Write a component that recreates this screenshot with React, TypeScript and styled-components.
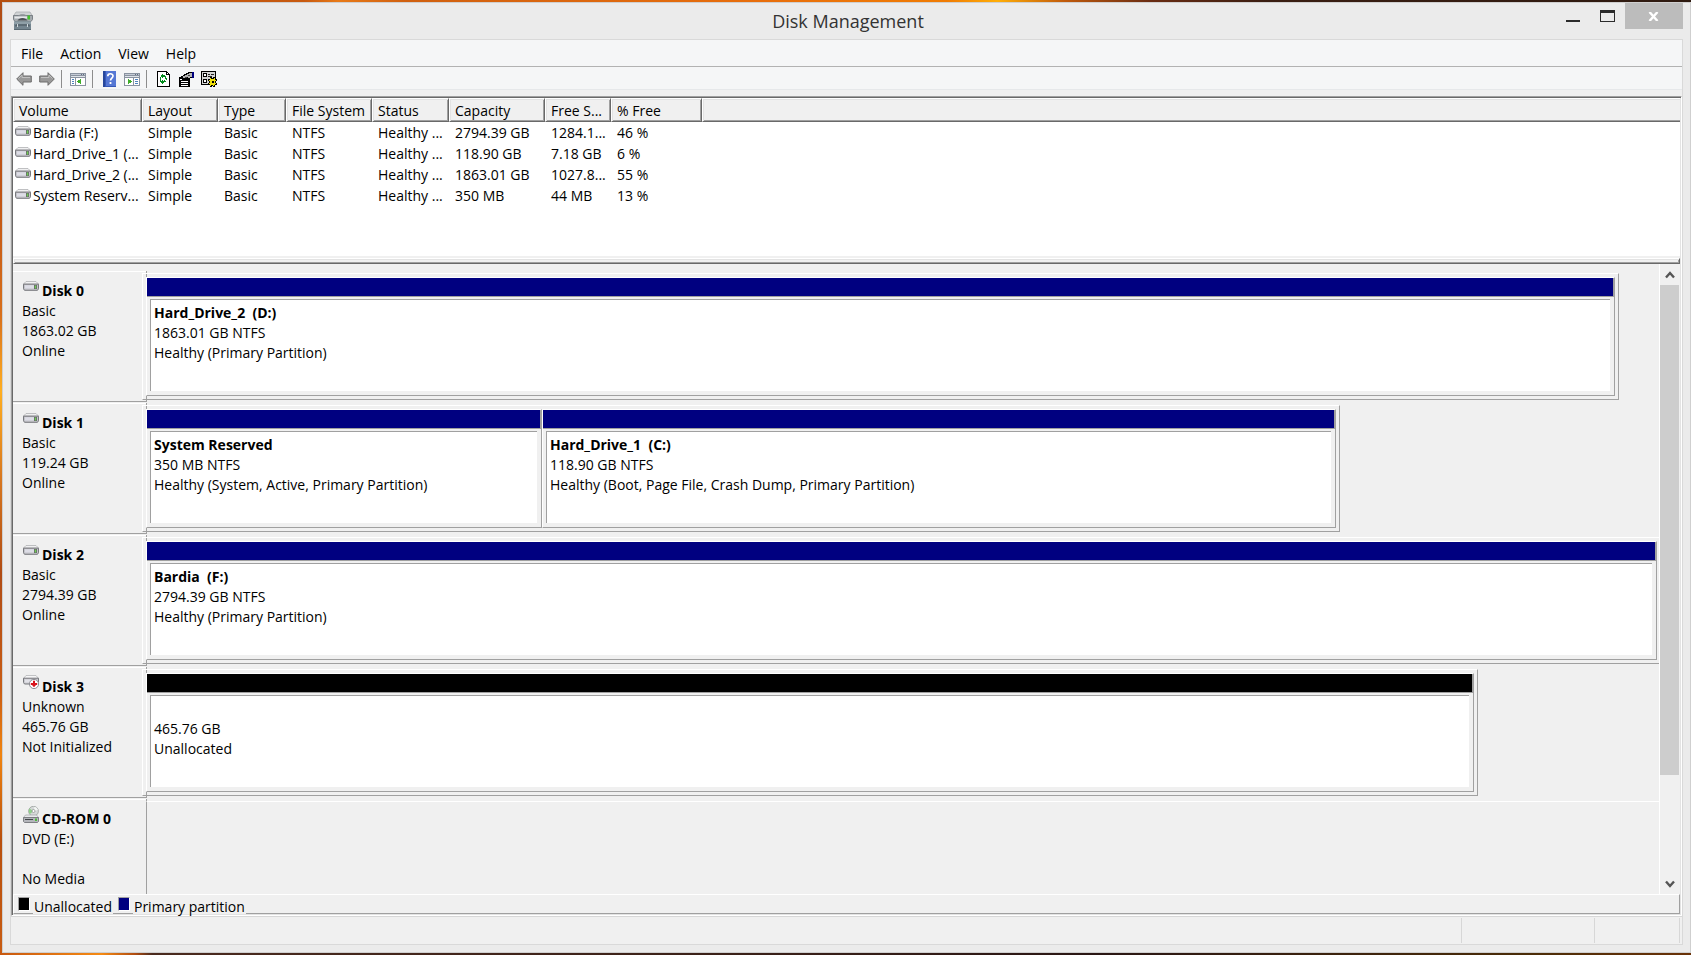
import React from "react";
import styled, { createGlobalStyle, css } from "styled-components";

type DriveKind = "disk" | "offline" | "cdrom";

interface Partition {
  name?: string;
  size: string;
  status: string;
  share: number;
}

interface Disk {
  name: string;
  kind: DriveKind;
  lines: string[];
  // width of the graph, in percent of the pane
  width: number;
  clipped?: boolean;
  unallocated?: boolean;
  partitions: Partition[];
}

const columns = [
  { title: "Volume", width: 129 },
  { title: "Layout", width: 76 },
  { title: "Type", width: 68 },
  { title: "File System", width: 86 },
  { title: "Status", width: 77 },
  { title: "Capacity", width: 96 },
  { title: "Free S...", width: 66 },
  { title: "% Free", width: 91 }
];

const volumes = [
  ["Bardia (F:)", "Simple", "Basic", "NTFS", "Healthy ...", "2794.39 GB", "1284.1...", "46 %"],
  ["Hard_Drive_1 (...", "Simple", "Basic", "NTFS", "Healthy ...", "118.90 GB", "7.18 GB", "6 %"],
  ["Hard_Drive_2 (...", "Simple", "Basic", "NTFS", "Healthy ...", "1863.01 GB", "1027.8...", "55 %"],
  ["System Reserv...", "Simple", "Basic", "NTFS", "Healthy ...", "350 MB", "44 MB", "13 %"]
];

const disks: Disk[] = [
  {
    name: "Disk 0",
    kind: "disk",
    lines: ["Basic", "1863.02 GB", "Online"],
    width: 97.36,
    partitions: [
      {
        name: "Hard_Drive_2  (D:)",
        size: "1863.01 GB NTFS",
        status: "Healthy (Primary Partition)",
        share: 1
      }
    ]
  },
  {
    name: "Disk 1",
    kind: "disk",
    lines: ["Basic", "119.24 GB", "Online"],
    width: 78.97,
    partitions: [
      {
        name: "System Reserved",
        size: "350 MB NTFS",
        status: "Healthy (System, Active, Primary Partition)",
        share: 396
      },
      {
        name: "Hard_Drive_1  (C:)",
        size: "118.90 GB NTFS",
        status: "Healthy (Boot, Page File, Crash Dump, Primary Partition)",
        share: 794
      }
    ]
  },
  {
    name: "Disk 2",
    kind: "disk",
    lines: ["Basic", "2794.39 GB", "Online"],
    width: 100,
    clipped: true,
    partitions: [
      {
        name: "Bardia  (F:)",
        size: "2794.39 GB NTFS",
        status: "Healthy (Primary Partition)",
        share: 1
      }
    ]
  },
  {
    name: "Disk 3",
    kind: "offline",
    lines: ["Unknown", "465.76 GB", "Not Initialized"],
    width: 88.06,
    unallocated: true,
    partitions: [{ size: "465.76 GB", status: "Unallocated", share: 1 }]
  },
  {
    name: "CD-ROM 0",
    kind: "cdrom",
    lines: ["DVD (E:)", "", "No Media"],
    width: 100,
    clipped: true,
    partitions: []
  }
];

const App: React.FC = () => {
  return (
    <>
      <GlobalStyle />
      <Desktop>
        <Window>
          <TitleBar>
            <AppIcon />
            <Title>Disk Management</Title>
            <WindowButtons>
              <WindowButton aria-label="Minimize">
                <svg width="14" height="13" shapeRendering="crispEdges">
                  <path d="M0 10h14v2H0z" fill="#2b2b2b" />
                </svg>
              </WindowButton>
              <WindowButton aria-label="Maximize">
                <svg width="15" height="12" shapeRendering="crispEdges">
                  <path
                    fillRule="evenodd"
                    d="M0 0h15v12H0zM1 3v8h13V3z"
                    fill="#2b2b2b"
                  />
                </svg>
              </WindowButton>
              <WindowButton aria-label="Close" $close>
                <svg width="11" height="9" viewBox="0 0 11 9">
                  <path
                    d="M1.5 0L9.5 9M9.5 0L1.5 9"
                    stroke="#fff"
                    strokeWidth="2.4"
                  />
                </svg>
              </WindowButton>
            </WindowButtons>
          </TitleBar>

          <Client>
            <MenuBar>
              <MenuItem>File</MenuItem>
              <MenuItem>Action</MenuItem>
              <MenuItem>View</MenuItem>
              <MenuItem>Help</MenuItem>
            </MenuBar>
            <Toolbar />
            <Pane>
              <VolumeList>
                <VolumeTable>
                  <colgroup>
                    {columns.map(c => (
                      <col key={c.title} style={{ width: c.width }} />
                    ))}
                    <col />
                  </colgroup>
                  <thead>
                    <tr>
                      {columns.map(c => (
                        <HeadCell key={c.title} scope="col">
                          {c.title}
                        </HeadCell>
                      ))}
                      <HeadFiller />
                    </tr>
                  </thead>
                  <tbody>
                    {volumes.map(row => (
                      <tr key={row[0]}>
                        {row.map((value, i) =>
                          i === 0 ? (
                            <NameCell key={i}>
                              <NameBox>
                                <DriveIcon kind="disk" />
                                {value}
                              </NameBox>
                            </NameCell>
                          ) : (
                            <Cell key={i}>{value}</Cell>
                          )
                        )}
                        <td />
                      </tr>
                    ))}
                  </tbody>
                </VolumeTable>
              </VolumeList>
              <Splitter />
              <DiskPane>
                <DiskList>
                  {disks.map(disk => (
                    <DiskItem key={disk.name} disk={disk} />
                  ))}
                </DiskList>
                <ScrollBar>
                  <ScrollButton aria-label="Scroll up">
                    <svg width="10" height="8" viewBox="0 0 10 8">
                      <path d="M1 6.5L5 2l4 4.5" {...chevron} />
                    </svg>
                  </ScrollButton>
                  <Thumb />
                  <Track />
                  <ScrollButton aria-label="Scroll down">
                    <svg width="10" height="8" viewBox="0 0 10 8">
                      <path d="M1 1.5L5 6l4-4.5" {...chevron} />
                    </svg>
                  </ScrollButton>
                </ScrollBar>
              </DiskPane>
              <Legend>
                <Swatch $color="#000" />
                <LegendText>Unallocated</LegendText>
                <Swatch $color="#000080" />
                <LegendText>Primary partition</LegendText>
              </Legend>
            </Pane>
            <StatusBar>
              <StatusCell $grow />
              <StatusCell $width={133} />
              <StatusCell $width={85} />
            </StatusBar>
          </Client>
        </Window>
      </Desktop>
    </>
  );
};

export default App;

const chevron = { fill: "none", stroke: "#555", strokeWidth: 2.4 };

const DiskItem: React.FC<{ disk: Disk }> = ({ disk }) => (
  <DiskRow $graph={disk.partitions.length > 0}>
    <DiskLabel>
      <DiskName>
        <DriveIcon kind={disk.kind} />
        {disk.name}
      </DiskName>
      {disk.lines.map((line, i) => (
        <Line key={i}>{line}</Line>
      ))}
    </DiskLabel>
    {disk.partitions.length > 0 ? (
      <DiskGraph
        style={{
          width: `${disk.width}%`,
          gridTemplateColumns: disk.partitions
            .map(p => `minmax(0, ${p.share}fr)`)
            .join(" ")
        }}
        $clipped={disk.clipped}
      >
        {disk.partitions.map(p => (
          <PartitionBox key={p.size}>
            <PartitionBar $color={disk.unallocated ? "#000" : "#000080"} />
            <PartitionBody>
              <Line $bold>{p.name}</Line>
              <Line>{p.size}</Line>
              <Line>{p.status}</Line>
            </PartitionBody>
          </PartitionBox>
        ))}
      </DiskGraph>
    ) : (
      <EmptyGraph />
    )}
  </DiskRow>
);

const DriveIcon: React.FC<{ kind: DriveKind }> = ({ kind }) => {
  if (kind === "cdrom") {
    return (
      <svg width="16" height="17" viewBox="0 0 16 17">
        <circle cx="10.5" cy="5.2" r="4.9" fill="#d5d9d8" stroke="#9a9f9d" strokeWidth=".8" />
        <path d="M10.5 5.2L6.5 2.6A4.7 4.7 0 0 0 6.8 8z" fill="#8fd08a" />
        <path d="M10.5 5.2L11.5.8A4.7 4.7 0 0 1 15 4z" fill="#f4f6f5" />
        <circle cx="10.5" cy="5" r="1.5" fill="#fff" stroke="#888" strokeWidth=".7" />
        <path d="M2.5 9h11l2 2.500H.5z" fill="#e9eaec" stroke="#a2a4a8" strokeWidth=".7" />
        <path d="M.5 11.500h15v4l-1 1h-13l-1-1z" fill="#b4b6bb" stroke="#74767b" strokeWidth=".9" />
        <path d="M2 13.500h8" stroke="#44464a" />
        <path d="M12 12.500h2V15h-2z" fill="#4cb83e" />
      </svg>
    );
  }
  if (kind === "offline") {
    return (
      <svg width="16" height="14" viewBox="0 0 16 14">
        <path d="M3 .5h10l2.500 3H.5z" fill="#f6f6f7" stroke="#b4b5b8" strokeWidth=".8" />
        <path d="M.5 3.200h15v4.300l-1 1.500h-13l-1-1.500z" fill="#c9cacf" stroke="#77787d" />
        <path d="M2 4.500h6v3H2z" fill="#e2e2e8" />
        <circle cx="11" cy="9" r="4.600" fill="#fff" stroke="#8e8e94" />
        <path d="M10 5.800h2V8h2.200v2h-1.200L11 12.300 9 10H7.800V8H10z" fill="#d8141c" />
      </svg>
    );
  }
  return (
    <svg width="16" height="10" viewBox="0 0 16 10">
      <path d="M3 .5h10l2.500 2.500H.5z" fill="#f0f0f1" stroke="#b0b1b4" strokeWidth=".8" />
      <path d="M.5 3.200h15v4.600l-1 1.500h-13l-1-1.500z" fill="#c3c4c9" stroke="#77787d" />
      <path d="M2 4.200h9v3.300H2z" fill="#dddde6" />
      <path d="M11 4h3v4h-3z" fill="#66686a" />
      <path d="M11.800 4.500h1.400v3h-1.400z" fill="#6fd052" />
    </svg>
  );
};

const AppIcon: React.FC = () => (
  <svg width="20" height="20" viewBox="0 0 20 20">
    <path d="M3 1h14l2.500 4H.5z" fill="#cfd2d4" stroke="#a9adb0" strokeWidth=".8" />
    <path d="M.5 4.500h19v4L18 10.500H2L.5 8.500z" fill="#a4aaae" stroke="#7b8186" />
    <path d="M1.500 5.500h12.500v2H1.500z" fill="#e6e8ea" />
    <path d="M5 5C6 2.500 13 2.500 14 5z" fill="#8b9195" />
    <path d="M4.500 9.500C6 6 13 6 14.500 9.500z" fill="#4b5054" />
    <path d="M14.500 4.500H17v4h-2.500z" fill="#45c22d" />
    <path d="M1 10.500h17V19H1z" fill="#74858f" />
    <path d="M1 10.500h17V13H1z" fill="#8f9fa7" />
    <path d="M3 15.500V14h13v1.500" fill="none" stroke="#47535b" />
    <path d="M4.500 13v3M14.500 13v3" stroke="#cfd8dc" />
    <path d="M1 18h17v1H1z" fill="#5a6972" />
  </svg>
);

const ArrowIcon: React.FC<{ forward?: boolean }> = ({ forward }) => (
  <svg width="16" height="14" viewBox="0 0 16 14">
    <path
      d={
        forward
          ? "M15.300 7L9 .7V4H.7v6H9v3.300z"
          : "M.7 7L7 .7V4h8.300v6H7v3.300z"
      }
      fill="#999"
      stroke="#6c6c6c"
    />
    <path
      d={forward ? "M2 5.500h8V3l3.500 3.500" : "M2.500 6.500L6 3v2.500h8"}
      fill="none"
      stroke="#c0c0c0"
    />
  </svg>
);

const TreeIcon: React.FC<{ right?: boolean }> = ({ right }) => (
  <svg width="16" height="13" viewBox="0 0 16 13" shapeRendering="crispEdges">
    <path d="M0 0h16v13H0z" fill="#8a93a0" />
    <path d="M1 1h14v1H1z" fill="#c5ccd6" />
    <path d="M11 1h1v1h-1zM13 1h1v1h-1z" fill="#5f6d80" />
    <path d="M1 3h14v1H1z" fill="#dfe4ea" />
    <path d={right ? "M1 5h8v7H1zM10 5h5v7h-5z" : "M1 5h4v7H1zM6 5h9v7H6z"} fill="#fff" />
    <path
      d={right ? "M11 6h3v1h-3zM11 8h3v1h-3zM11 10h3v1h-3z" : "M2 6h2v1H2zM2 8h2v1H2zM2 10h2v1H2z"}
      fill="#4f83bd"
    />
    <path d={right ? "M4 5.500l4 3-4 3z" : "M11 5.500l-4 3 4 3z"} fill="#3fae2a" />
  </svg>
);

const HelpIcon: React.FC = () => (
  <svg width="13" height="16" viewBox="0 0 13 16">
    <path d="M0 0h13v16H0z" fill="#3558b8" />
    <path d="M3 0h10v15H3z" fill="#5577d4" />
    <path d="M0 0h2v16H0z" fill="#27479c" />
    <path
      d="M4.800 5.200C4.800 2 10 2 10 5c0 2-2.500 2.200-2.500 4.500"
      fill="none"
      stroke="#fff"
      strokeWidth="1.7"
    />
    <path d="M6.600 11h1.800v2H6.600z" fill="#fff" />
  </svg>
);

const RefreshIcon: React.FC = () => (
  <svg width="13" height="16" viewBox="0 0 13 16" shapeRendering="crispEdges">
    <path d="M0 0h10v1h1v1h1v1h1v13H0z" fill="#000" />
    <path d="M1 1h8v3h3v11H1z" fill="#fff" />
    <path d="M10 2h1v1h-1z" fill="#fff" />
    <path
      d="M6 3v1h2v1h1v3H8V6H6v1H5V6H4V4h1V3zM3 8h1v2h1V9h1v1h1V9h1v2H7v1H6v1H5v-1H4v-1H3z"
      fill="#008a1c"
    />
    <path d="M9 7h1v2H9zM8 10h1v1H8zM3 6h1v2H3z" fill="#008a1c" />
  </svg>
);

const PropertiesIcon: React.FC = () => (
  <svg width="15" height="15" viewBox="0 0 15 15" shapeRendering="crispEdges">
    <path d="M0 5h11v10H0z" fill="#000" />
    <path d="M1 7h2v1H1zM2 9h7v1H2zM2 11h7v1H2zM2 13h7v1H2z" fill="#fff" />
    <path d="M2 4h2V3h1V2h2V1h2V0h4v6h-2v2H9V7H8v1H7V7H5V6H3V5H2z" fill="#000" />
    <path d="M4 4h2V3h2V2h2V1h3v4h-2v1H9V5H6v1H4z" fill="#b4b4b4" />
    <path d="M6 5h2v1H6zM9 3h2v1H9z" fill="#444" />
    <path d="M13 0h2v6h-2z" fill="#000080" />
  </svg>
);

const SettingsIcon: React.FC = () => (
  <svg width="16" height="16" viewBox="0 0 16 16" shapeRendering="crispEdges">
    <path d="M0 0h15v14H0z" fill="#000" />
    <path d="M1 1h13v12H1z" fill="#d4d4d4" />
    <path d="M2 2h4v4H2zM2 8h4v4H2z" fill="#000" />
    <path d="M3 3h2v2H3zM3 9h2v2H3z" fill="#fff" />
    <path d="M7 3h2v1H7zM10 3h3v1h-3zM7 5h4v1H7z" fill="#222" />
    <path d="M9 6h2v1h1V6h2v2h2v2h-1v2h1v2h-2v2h-2v-1h-1v1H9v-2H7v-2h1v-2H7V8h2z" fill="#000" />
    <path d="M9 7h1v1h3V7h1v2h1v1h-1v2h1v1h-1v1h-1v1h-1v-1h-2v1H9v-2H8v-1h1v-2H8V9h1z" fill="#f2e20c" />
    <path d="M11 10h2v2h-2z" fill="#000" />
  </svg>
);

const Toolbar: React.FC = () => (
  <ToolRow>
    <ToolButton aria-label="Back">
      <ArrowIcon />
    </ToolButton>
    <ToolButton aria-label="Forward">
      <ArrowIcon forward />
    </ToolButton>
    <Separator />
    <ToolButton aria-label="Show or hide console tree">
      <TreeIcon />
    </ToolButton>
    <Separator />
    <ToolButton aria-label="Help">
      <HelpIcon />
    </ToolButton>
    <ToolButton aria-label="Show or hide action pane">
      <TreeIcon right />
    </ToolButton>
    <Separator />
    <ToolButton aria-label="Refresh">
      <RefreshIcon />
    </ToolButton>
    <ToolButton aria-label="Properties">
      <PropertiesIcon />
    </ToolButton>
    <ToolButton aria-label="Settings">
      <SettingsIcon />
    </ToolButton>
  </ToolRow>
);

const GlobalStyle = createGlobalStyle`
  * {
    box-sizing: border-box;
  }

  body {
    margin: 0;
    color: #000;
    font-family: "Open Sans", "Noto Sans", sans-serif;
    font-size: 14px;
    line-height: 20px;
  }

  button {
    padding: 0;
    border: 0;
    background: none;
    color: inherit;
    font: inherit;
  }

  svg {
    display: block;
    flex: none;
  }
`;

const raised = css`
  border-style: solid;
  border-width: 1px;
  border-color: #fff #a0a0a0 #a0a0a0 #fff;
`;

const Desktop = styled("div")`
  display: flex;
  height: 100vh;
  padding: 2px 0 2px 2px;
  background: linear-gradient(
        90deg,
        #b5500f 0%,
        #c85a10 18%,
        #e87a18 20%,
        #d06010 24%,
        #e86e0c 45%,
        #f07c04 56%,
        #ffae08 59%,
        #c05a0c 63%,
        #6a2c12 68%,
        #3a1e12 75%,
        #2e1a10 100%
      )
      top / 100% 2px no-repeat,
    linear-gradient(
        90deg,
        #c8580f 0%,
        #f58a14 6%,
        #b04c10 8%,
        #4a2a1e 9%,
        #3a2018 45%,
        #2a1614 65%,
        #4a2c08 90%,
        #6a3208 100%
      )
      bottom / 100% 2px no-repeat,
    linear-gradient(
        180deg,
        #b04c14 0%,
        #c05414 20%,
        #d8701c 33%,
        #ffae20 41%,
        #d87820 50%,
        #b04c14 60%,
        #c85c14 72%,
        #f08410 79%,
        #b8500f 88%,
        #c85c12 100%
      )
      left / 2px 100% no-repeat;
`;

const Window = styled("main")`
  display: flex;
  flex: 1;
  flex-direction: column;
  min-width: 0;
  padding: 0 7px 7px;
  border: 1px solid #cfcfcf;
  background-color: #ebebeb;
`;

const TitleBar = styled("header")`
  display: grid;
  grid-template-columns: 1fr auto 1fr;
  align-items: center;
  height: 36px;
  padding-left: 3px;
`;

const Title = styled("h1")`
  margin: 0;
  color: #333;
  font-size: 18px;
  font-weight: 400;
  line-height: 24px;
`;

const WindowButtons = styled("div")`
  display: flex;
  justify-self: end;
  align-self: start;
`;

const WindowButton = styled("button")<{ $close?: boolean }>`
  display: flex;
  align-items: center;
  justify-content: center;
  width: ${({ $close }) => ($close ? "58px" : "34px")};
  height: 26px;
  padding-right: 2px;
  background-color: ${({ $close }) => ($close ? "#bcbcbc" : "transparent")};
`;

const Client = styled("div")`
  display: flex;
  flex: 1;
  flex-direction: column;
  min-height: 0;
  border: 1px solid #d9d9d9;
  background-color: #f0f0f0;
`;

const MenuBar = styled("nav")`
  display: flex;
  align-items: center;
  gap: 17px;
  height: 27px;
  padding: 2px 0 0 10px;
  border-bottom: 1px solid #b2b2b2;
  background-color: #f5f6f7;
`;

const MenuItem = styled("button")`
  font-size: 14px;
`;

const ToolRow = styled("div")`
  display: flex;
  align-items: center;
  height: 23px;
  padding: 2px 0 0 1px;
  border-bottom: 1px solid #e6e8ea;
  background-color: #f5f6f7;
`;

const ToolButton = styled("button")`
  display: flex;
  align-items: center;
  justify-content: center;
  width: 23px;
  height: 20px;
  padding: 0 3px 0 4px;
`;

const Separator = styled("span")`
  width: 1px;
  height: 18px;
  margin: 0 4px 0 3px;
  background-color: #8d8d8d;
`;

const Pane = styled("section")`
  display: flex;
  flex: 1;
  flex-direction: column;
  min-height: 0;
  margin-top: 6px;
  border-style: solid;
  border-width: 1px;
  border-color: #a0a0a0 #fff #fff #a0a0a0;
  box-shadow: inset 1px 1px #696969, inset -1px -1px #e3e3e3;
  padding: 1px;
`;

const VolumeList = styled("div")`
  height: 158px;
  overflow: hidden;
  background-color: #fff;
`;

const VolumeTable = styled("table")`
  width: 100%;
  table-layout: fixed;
  border-collapse: separate;
  border-spacing: 0;
  white-space: nowrap;
`;

const headFace = css`
  height: 24px;
  background-color: #f0f0f0;
  font-weight: 400;
  text-align: left;
`;

const HeadCell = styled("th")`
  ${headFace}
  padding: 2px 0 0 5px;
  border-style: solid;
  border-width: 1px;
  border-color: #fff #696969 #696969 #fff;
  box-shadow: inset 1px 1px #e3e3e3, inset -1px -1px #a0a0a0;
`;

const HeadFiller = styled("td")`
  ${headFace}
  padding: 0;
  border-style: solid;
  border-width: 1px 0 1px 1px;
  border-color: #fff #696969 #696969 #fff;
  box-shadow: inset 1px 1px #e3e3e3, inset 0 -1px #a0a0a0;
`;

const Cell = styled("td")`
  height: 21px;
  padding: 0 0 0 6px;
`;

const NameCell = styled(Cell)`
  padding-left: 2px;
`;

const NameBox = styled("div")`
  display: flex;
  gap: 2px;

  svg {
    margin-top: 3px;
  }
`;

const Splitter = styled("div")`
  height: 6px;
  margin-top: 2px;
  border-style: solid;
  border-width: 1px;
  border-color: #fff #696969 #696969 #fff;
  box-shadow: inset 1px 1px #e3e3e3, inset -1px -1px #a0a0a0;
`;

const DiskPane = styled("div")`
  display: flex;
  flex: 1;
  min-height: 0;
`;

const DiskList = styled("div")`
  flex: 1;
  min-width: 0;
  padding-top: 7px;
  overflow: hidden;
`;

// The short grey ticks join the label column to the graph
const DiskRow = styled("article")<{ $graph: boolean }>`
  display: grid;
  grid-template-columns: 129px 4px minmax(0, 1fr);
  height: 132px;
  background: linear-gradient(#a0a0a0 2px, transparent 2px 3px, #a0a0a0 3px)
    133px 0 / 1px 6px no-repeat;
  ${({ $graph }) =>
    $graph &&
    css`
      background: linear-gradient(#a0a0a0 2px, transparent 2px 3px, #a0a0a0 3px)
          133px 0 / 1px 6px no-repeat,
        linear-gradient(#a0a0a0, #a0a0a0) 133px 124px / 1px 7px no-repeat;
    `}
`;

const DiskLabel = styled("div")`
  grid-area: 1 / 1 / 2 / 3;
  height: 131px;
  padding: 9px 0 0 9px;
  border-top: 1px solid #fff;
  border-bottom: 1px solid #a0a0a0;
  white-space: nowrap;
`;

const DiskName = styled("div")`
  display: flex;
  gap: 3px;
  height: 20px;
  padding-left: 1px;
  font-weight: 700;

  svg {
    align-self: center;
    margin-bottom: 10px;
  }
`;

const Line = styled("div")<{ $bold?: boolean }>`
  height: 20px;
  font-weight: ${({ $bold }) => ($bold ? 700 : 400)};
  white-space: pre;
`;

const DiskGraph = styled("div")<{ $clipped?: boolean }>`
  display: grid;
  grid-area: 1 / 2 / 2 / 4;
  height: 127px;
  margin-top: 2px;
  padding: 3px;
  ${raised}
  ${({ $clipped }) =>
    $clipped &&
    css`
      padding-right: 2px;
      border-right: 0;
    `}
`;

const EmptyGraph = styled("div")`
  grid-area: 1 / 3 / 2 / 4;
  margin-top: 2px;
  border-top: 1px solid #fff;
  border-left: 1px solid #a0a0a0;
`;

const PartitionBox = styled("div")`
  display: flex;
  flex-direction: column;
  min-width: 0;
  ${raised}
`;

const PartitionBar = styled("div")<{ $color: string }>`
  height: 19px;
  border-right: 1px solid #a0a0a0;
  border-bottom: 1px solid #a0a0a0;
  background-color: ${({ $color }) => $color};
`;

const PartitionBody = styled("div")`
  height: 92px;
  margin: 2px 4px 0 3px;
  padding: 3px 0 0 3px;
  border-top: 1px solid #a0a0a0;
  border-left: 1px solid #a0a0a0;
  background-color: #fff;
  overflow: hidden;
`;

const ScrollBar = styled("div")`
  display: flex;
  flex-direction: column;
  width: 21px;
  padding-right: 1px;
  border-left: 1px solid #fff;
`;

const ScrollButton = styled("button")`
  display: flex;
  align-items: center;
  justify-content: center;
  height: 21px;
`;

const Thumb = styled("div")`
  flex: 5;
  background-color: #cdcdcd;
`;

const Track = styled("div")`
  flex: 1;
`;

const Legend = styled("footer")`
  display: flex;
  height: 20px;
  padding-left: 4px;
  ${raised}
`;

const Swatch = styled("span")<{ $color: string }>`
  width: 12px;
  height: 14px;
  margin-top: 2px;
  ${raised}
  border-color: #a0a0a0 #fff #fff #a0a0a0;
  background-color: ${({ $color }) => $color};
`;

const LegendText = styled("span")`
  height: 19px;
  margin: 0 5px 0 3px;
  padding: 0 1px;
  background-color: #f0f0f0;
  line-height: 24px;
`;

const StatusBar = styled("div")`
  display: flex;
  height: 28px;
  padding: 1px 2px 1px 0;
  border-top: 1px solid #d7d7d7;
`;

const StatusCell = styled("div")<{ $grow?: boolean; $width?: number }>`
  flex: ${({ $grow, $width }) => ($grow ? "1" : `0 0 ${$width}px`)};
  border-right: 1px solid #d7d7d7;
`;
